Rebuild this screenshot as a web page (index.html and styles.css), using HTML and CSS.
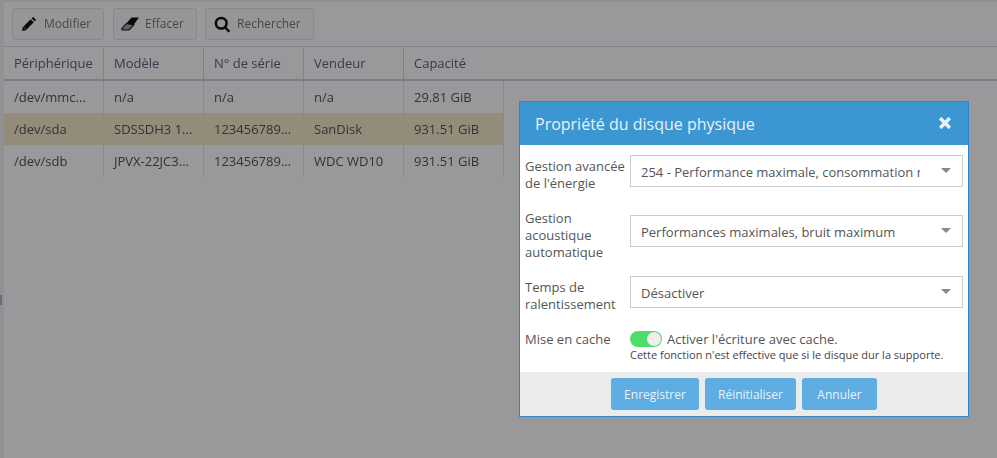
FILE: index.html
```html
<!DOCTYPE html>
<html lang="fr">
<head>
<meta charset="utf-8">
<title>Disques</title>
<link rel="stylesheet" href="styles.css">
</head>
<body>
<div class="page">
  <aside class="rail"><span class="handle"></span></aside>
  <main class="content">
    <div class="toolbar">
      <button class="tool t1"><svg class="ico" viewBox="0 0 16 16"><path d="M1 15l.9-4.200L10.300 2.400l3.300 3.300L5.200 14.100z"/><path d="M11.300 1.400l.9-.8a1 1 0 0 1 1.400 0l1.800 1.800a1 1 0 0 1 0 1.400l-.8.9z"/><path class="cut" d="M2.800 10.800l2.400 2.400"/></svg>Modifier</button>
      <button class="tool t2"><svg class="ico ico-wide" viewBox="0 0 18 14"><path d="M5.500 6.300L10.500 0.500H18L13.200 6.900 12.500 7.700z"/><path class="edge" d="M5.300 6.500L12.800 7.900 8 13H1.500a.8.8 0 0 1-.6-1.300z"/></svg>Effacer</button>
      <button class="tool t3"><svg class="ico ico-search" viewBox="0 0 16 16"><circle cx="6.800" cy="6.800" r="5" fill="none" stroke="currentColor" stroke-width="2.400"/><path d="M10.500 9.200l4.800 4.800-1.600 1.600-4.800-4.800z"/></svg>Rechercher</button>
    </div>
    <table class="grid">
      <thead>
        <tr><th>Périphérique</th><th>Modèle</th><th>N° de série</th><th>Vendeur</th><th>Capacité</th><th class="filler"></th></tr>
      </thead>
      <tbody>
        <tr><td>/dev/mmc...</td><td>n/a</td><td>n/a</td><td>n/a</td><td>29.81 GiB</td></tr>
        <tr class="selected"><td>/dev/sda</td><td>SDSSDH3 1...</td><td>123456789...</td><td>SanDisk</td><td>931.51 GiB</td></tr>
        <tr><td>/dev/sdb</td><td>JPVX-22JC3...</td><td>123456789...</td><td>WDC WD10</td><td>931.51 GiB</td></tr>
      </tbody>
    </table>
  </main>
</div>
<div class="overlay"></div>
<section class="dialog">
  <header class="dialog-head">
    <h1>Propriété du disque physique</h1>
    <svg class="close" viewBox="0 0 12 12"><path d="M2.800 0.300L6 3.500 9.200 0.300a.6.6 0 0 1 .8 0L11.700 2a.6.6 0 0 1 0 .8L8.500 6l3.200 3.200a.6.6 0 0 1 0 .8L10 11.700a.6.6 0 0 1-.8 0L6 8.500 2.800 11.700a.6.6 0 0 1-.8 0L.3 10a.6.6 0 0 1 0-.8L3.500 6 .3 2.800a.6.6 0 0 1 0-.8L2 .3a.6.6 0 0 1 .8 0z"/></svg>
  </header>
  <div class="dialog-body">
    <div class="field f1">
      <label>Gestion avancée de l'énergie</label>
      <div class="select"><span class="value">254 - Performance maximale, consommation modérée</span><i class="caret"></i></div>
    </div>
    <div class="field f2">
      <label>Gestion acoustique automatique</label>
      <div class="select"><span class="value">Performances maximales, bruit maximum</span><i class="caret"></i></div>
    </div>
    <div class="field f3">
      <label>Temps de ralentissement</label>
      <div class="select"><span class="value">Désactiver</span><i class="caret"></i></div>
    </div>
    <div class="field f4">
      <label>Mise en cache</label>
      <div class="cache">
        <div class="cache-line"><span class="switch"><span class="knob"></span></span>Activer l'écriture avec cache.</div>
        <small>Cette fonction n'est effective que si le disque dur la supporte.</small>
      </div>
    </div>
  </div>
  <footer class="dialog-foot">
    <button class="btn b1">Enregistrer</button>
    <button class="btn b2">Réinitialiser</button>
    <button class="btn b3">Annuler</button>
  </footer>
</section>
</body>
</html>
```
FILE: styles.css
```css
* { box-sizing: border-box; }
html, body { margin: 0; height: 100%; overflow: hidden; }
body {
  width: 997px;
  height: 458px;
  background: #fff;
  font-family: "Open Sans", "Liberation Sans", sans-serif;
  font-size: 13px;
  color: #555;
  position: relative;
}
.page {
  display: flex;
  height: 100%;
  filter: blur(0.5px);
  border-top: 2px solid #eee;
}
.rail {
  width: 4px;
  background: #f2f2f3;
  position: relative;
}
.handle {
  position: absolute;
  left: 0;
  top: 293px;
  width: 2px;
  height: 10px;
  background: #a9b7c9;
}
.content { flex: 1; min-width: 0; }
.toolbar {
  display: flex;
  padding: 6px 0 0 8px;
  height: 44px;
}
.tool {
  display: flex;
  align-items: center;
  height: 32px;
  padding: 0 3px 2px 8px;
  background: #fafafa;
  border: 1px solid #e4e4e4;
  border-radius: 3px;
  font: 12px "Open Sans", sans-serif;
  color: #777;
}
.t1 { width: 92px; }
.t2 { width: 84px; margin-left: 9px; }
.t3 { width: 109px; margin-left: 8px; }
.ico { width: 15px; height: 15px; margin-right: 8px; margin-top: 2px; fill: #111; color: #111; }
.ico-wide { width: 18px; height: 14px; margin-right: 6px; margin-left: -1px; }
.ico-search { width: 17px; height: 17px; margin-right: 6px; margin-top: 3px; }
.cut { fill: none; stroke: #9a9ba0; stroke-width: 1; }
.edge { fill: #a8a8ac; stroke: #111; stroke-width: 1.100; }
.grid {
  border-collapse: separate;
  border-spacing: 0;
  table-layout: fixed;
  width: 993px;
}
.grid th, .grid td {
  width: 100px;
  padding: 0 10px;
  text-align: left;
  white-space: nowrap;
  overflow: hidden;
  border-right: 1px solid #e6e6e8;
  font-weight: 400;
}
.grid th {
  height: 35px;
  color: #5a6378;
  border-top: 1px solid #dcdcdf;
  border-right-color: #d8d8dc;
  border-bottom: 2px solid #cfcfd3;
}
.grid th:nth-child(5), .grid .filler { border-right: none; }
.grid .filler { width: auto; }
.grid td { height: 32px; color: #555; }
.grid .selected td { background: #f6eac8; border-right-color: #f0e4c2; }
.overlay {
  position: absolute;
  inset: 0;
  background: rgba(0, 1, 6, 0.4);
}
.dialog {
  position: absolute;
  left: 519px;
  top: 101px;
  width: 450px;
  height: 316px;
  background: #fff;
  border: 1px solid #2f86c8;
  display: flex;
  flex-direction: column;
}
.dialog-head {
  height: 43px;
  background: #3c96d2;
  display: flex;
  align-items: center;
  justify-content: space-between;
  padding: 0 17px 0 15px;
  flex: none;
}
.dialog-head h1 {
  margin: 0;
  font-size: 16px;
  font-weight: 400;
  color: #e8f2fa;
}
.close { width: 12px; height: 12px; fill: #e8f2fa; margin-top: -1px; }
.dialog-body { flex: 1; position: relative; }
.field { display: flex; position: absolute; left: 5px; right: 5px; }
.f1 { top: 10px; }
.f2 { top: 70px; }
.f3 { top: 131px; }
.f4 { top: 185px; }
.field label {
  width: 105px;
  flex: none;
  line-height: 17px;
  padding-top: 3px;
  color: #555;
}
.f2 label { padding-top: 0; margin-top: -5px; }
.f4 label { padding-top: 1px; }
.select {
  width: 333px;
  height: 32px;
  border: 1px solid #ccc;
  background: #fff;
  display: flex;
  align-items: center;
  justify-content: space-between;
  padding: 1px 11px 0 10px;
  color: #555;
}
.value { width: 279px; overflow: hidden; white-space: nowrap; }
.caret {
  width: 0;
  height: 0;
  border-left: 5px solid transparent;
  border-right: 5px solid transparent;
  border-top: 5px solid #888;
  flex: none;
  margin-top: -2px;
}
.cache-line { display: flex; align-items: center; height: 18px; color: #555; }
.switch {
  width: 32px;
  height: 16px;
  border-radius: 8px;
  background: #4cde68;
  margin-right: 5px;
  display: flex;
  justify-content: flex-end;
  align-items: center;
  padding-right: 1px;
}
.knob { width: 14px; height: 14px; border-radius: 50%; background: #eee; }
.cache small { display: block; font-size: 11px; line-height: 14px; color: #444; }
.dialog-foot {
  height: 44px;
  background: #ebebeb;
  display: flex;
  justify-content: center;
  align-items: center;
  gap: 6px;
  flex: none;
}
.btn {
  height: 32px;
  border: none;
  border-radius: 3px;
  background: #5dade2;
  color: #e8f2fa;
  font: 12px "Open Sans", sans-serif;
}
.b1 { width: 88px; }
.b2 { width: 91px; }
.b3 { width: 75px; }
```
